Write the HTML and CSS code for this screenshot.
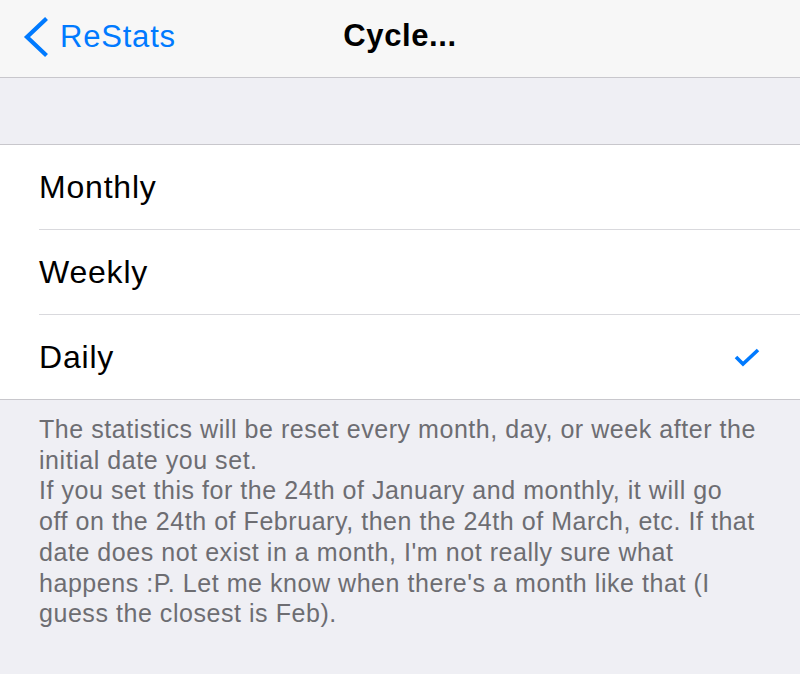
FILE: index.html
```html
<!DOCTYPE html>
<html>
<head>
    <title>Cycle...</title>
    <link rel="stylesheet" href="styles.css">
</head>
<body>
    <div class="nav-bar">
        <div class="nav-back">
            <svg class="chevron" width="26" height="40" viewBox="0 0 26 40">
                <path d="M23 3 L5 20 L23 37" fill="none" stroke="#007aff" stroke-width="4.2" stroke-linecap="square"/>
            </svg>
            <span>ReStats</span>
        </div>
        <div class="nav-title">Cycle...</div>
    </div>

    <div class="group-gap"></div>

    <div class="table-group">
        <div class="cell">
            <span class="cell-label">Monthly</span>
        </div>
        <div class="cell">
            <span class="cell-label">Weekly</span>
        </div>
        <div class="cell">
            <span class="cell-label">Daily</span>
            <svg class="check" width="26" height="20" viewBox="0 0 26 20">
                <path d="M2 10 L9 17 L24 3" fill="none" stroke="#007aff" stroke-width="3.6"/>
            </svg>
        </div>
    </div>

    <div class="group-footer">
        <p>The statistics will be reset every month, day, or week after the<br>
        initial date you set.<br>
        If you set this for the 24th of January and monthly, it will go<br>
        off on the 24th of February, then the 24th of March, etc. If that<br>
        date does not exist in a month, I'm not really sure what<br>
        happens :P. Let me know when there's a month like that (I<br>
        guess the closest is Feb).</p>
    </div>
</body>
</html>
```

FILE: styles.css
```css
html, body {
    margin: 0;
    padding: 0;
}
body {
    font-family: "Liberation Sans", Arial, sans-serif;
    background-color: #efeff4;
    width: 800px;
    height: 674px;
    overflow: hidden;
}

.nav-bar {
    height: 77px;
    background-color: #f7f7f7;
    border-bottom: 1px solid #c8c7cc;
    display: flex;
    align-items: center;
    position: relative;
}
.nav-back {
    display: flex;
    align-items: center;
    color: #007aff;
    font-size: 31px;
    letter-spacing: 0.8px;
    padding-left: 22px;
    gap: 12px;
    margin-top: -4px;
}
.chevron {
    display: block;
}
.nav-title {
    position: absolute;
    left: 0;
    right: 0;
    top: 0;
    bottom: 0;
    display: flex;
    align-items: center;
    justify-content: center;
    font-size: 31px;
    font-weight: bold;
    letter-spacing: 0.6px;
    color: #000;
    padding-bottom: 6px;
}

.group-gap {
    height: 66px;
}

.table-group {
    background-color: #fff;
    border-top: 1px solid #c8c7cc;
    border-bottom: 1px solid #c8c7cc;
    padding-left: 39px;
}
.cell {
    height: 84px;
    display: flex;
    align-items: center;
    justify-content: space-between;
    padding-right: 40px;
    border-bottom: 1px solid #d9d9dd;
}
.cell:last-child {
    border-bottom: none;
}
.cell-label {
    font-size: 32px;
    letter-spacing: 0.8px;
    color: #000;
}
.check {
    display: block;
}

.group-footer {
    padding: 14px 0 0 39px;
}
.group-footer p {
    margin: 0;
    font-size: 25px;
    line-height: 30.7px;
    color: #6d6d72;
    letter-spacing: 0.55px;
    white-space: nowrap;
}
```
